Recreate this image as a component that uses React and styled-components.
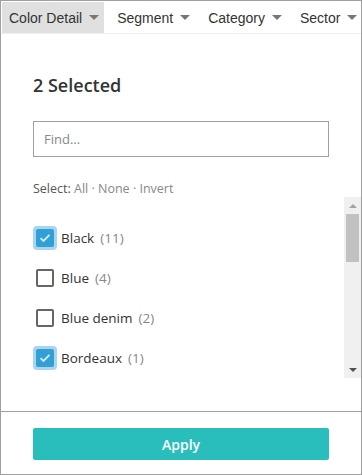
import React from 'react';
import styled, { createGlobalStyle } from 'styled-components';

const GlobalStyle = createGlobalStyle`
  html, body {
    margin: 0;
    padding: 0;
    background: #fff;
  }
  * {
    box-sizing: border-box;
  }
`;

const Frame = styled.div`
  width: 362px;
  height: 475px;
  border: 1px solid #a0a0a0;
  display: flex;
  flex-direction: column;
  overflow: hidden;
  font-family: "Open Sans", "Noto Sans", sans-serif;
  color: #333;
`;

const TabBar = styled.div`
  display: flex;
  padding: 1px 0 0 1px;
  height: 33px;
  border-bottom: 1px solid #f0f0f0;
  white-space: nowrap;
`;

const Tab = styled.div`
  display: flex;
  align-items: center;
  flex-shrink: 0;
  height: 31px;
  padding: 0 5px 0 7px;
  margin-right: 6px;
  background: ${(p) => (p.$active ? '#e0e0e0' : 'transparent')};
  font-family: "Liberation Sans", Arial, sans-serif;
  font-size: 14px;
  color: #333;
`;

const Caret = styled.span`
  width: 0;
  height: 0;
  margin-left: 7px;
  border-left: 5px solid transparent;
  border-right: 5px solid transparent;
  border-top: 5px solid #777;
`;

const Body = styled.div`
  flex: 1;
  display: flex;
  flex-direction: column;
  padding: 39px 0 32px 32px;
  border-bottom: 1px solid #a0a0a0;
`;

const Heading = styled.h2`
  margin: 0;
  font-size: 18px;
  line-height: 24px;
  font-weight: 600;
  color: #333;
`;

const FindInput = styled.input`
  width: 296px;
  height: 36px;
  margin-top: 24px;
  border: 1px solid #a0a0a0;
  border-radius: 0;
  padding: 0 10px;
  font-family: inherit;
  font-size: 13px;
  color: #333;
  outline: none;

  &::placeholder {
    color: #888;
  }
`;

const SelectLine = styled.div`
  margin-top: 23px;
  font-size: 12.5px;
  line-height: 17px;
  color: #555;
`;

const LinkText = styled.span`
  color: #888;
`;

const ListArea = styled.div`
  display: flex;
  height: 181px;
`;

const List = styled.div`
  flex: 1;
  padding-top: 21px;
  overflow: hidden;
`;

const Row = styled.label`
  display: flex;
  align-items: center;
  height: 40px;
  font-size: 13.5px;
  color: #333;
`;

const BoxWrap = styled.span`
  width: 24px;
  height: 24px;
  display: flex;
  align-items: center;
  justify-content: center;
  border-radius: 4px;
  background: ${(p) => (p.$checked ? '#a8d6f0' : 'transparent')};
`;

const Box = styled.span`
  width: 18px;
  height: 18px;
  border-radius: 2px;
  display: flex;
  align-items: center;
  justify-content: center;
  background: ${(p) => (p.$checked ? '#329fd7' : '#fff')};
  border: 2px solid ${(p) => (p.$checked ? '#329fd7' : '#666')};
`;

const Name = styled.span`
  margin-left: 4px;
`;

const Count = styled.span`
  margin-left: 6px;
  color: #888;
`;

const Scrollbar = styled.div`
  width: 17px;
  display: flex;
  flex-direction: column;
  align-items: center;
  background: #f0f0f0;
`;

const ArrowButton = styled.div`
  width: 17px;
  height: 17px;
  display: flex;
  align-items: center;
  justify-content: center;
`;

const Arrow = styled.span`
  width: 0;
  height: 0;
  border-left: 4px solid transparent;
  border-right: 4px solid transparent;
  ${(p) => (p.$up ? 'border-bottom: 4px solid #a3a3a3;' : 'border-top: 4px solid #505050;')}
`;

const Thumb = styled.div`
  width: 13px;
  height: 48px;
  background: #c1c1c1;
`;

const Spacer = styled.div`
  flex: 1;
`;

const Footer = styled.div`
  padding: 16px 0 0 32px;
  height: 62px;
`;

const ApplyButton = styled.button`
  width: 296px;
  height: 32px;
  border: none;
  border-radius: 2px;
  background: #29bebb;
  color: #fff;
  font-family: "Open Sans", sans-serif;
  font-size: 14px;
  font-weight: 600;
  cursor: pointer;
`;

const Check = () => (
  <svg width="12" height="10" viewBox="0 0 12 10">
    <path d="M1.5 5.2 L4.5 8 L10.5 1.8" fill="none" stroke="#d6eefb" strokeWidth="1.8" />
  </svg>
);

const tabs = ['Color Detail', 'Segment', 'Category', 'Sector'];

const items = [
  { name: 'Black', count: 11, checked: true },
  { name: 'Blue', count: 4, checked: false },
  { name: 'Blue denim', count: 2, checked: false },
  { name: 'Bordeaux', count: 1, checked: true },
];

const App = () => {
  return (
    <>
      <GlobalStyle />
      <Frame>
        <TabBar>
          {tabs.map((t, i) => (
            <Tab key={t} $active={i === 0}>
              {t}
              <Caret />
            </Tab>
          ))}
        </TabBar>
        <Body>
          <Heading>2 Selected</Heading>
          <FindInput placeholder="Find..." />
          <SelectLine>
            Select: <LinkText>All · None · Invert</LinkText>
          </SelectLine>
          <ListArea>
            <List>
              {items.map((it) => (
                <Row key={it.name}>
                  <BoxWrap $checked={it.checked}>
                    <Box $checked={it.checked}>{it.checked && <Check />}</Box>
                  </BoxWrap>
                  <Name>{it.name}</Name>
                  <Count>({it.count})</Count>
                </Row>
              ))}
            </List>
            <Scrollbar>
              <ArrowButton>
                <Arrow $up />
              </ArrowButton>
              <Thumb />
              <Spacer />
              <ArrowButton>
                <Arrow />
              </ArrowButton>
            </Scrollbar>
          </ListArea>
        </Body>
        <Footer>
          <ApplyButton>Apply</ApplyButton>
        </Footer>
      </Frame>
    </>
  );
};

export default App;
